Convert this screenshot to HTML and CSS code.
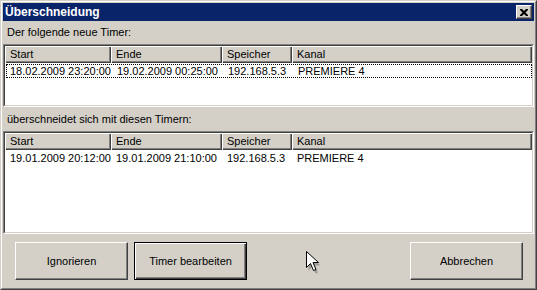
FILE: index.html
```html
<!DOCTYPE html>
<html lang="de">
<head>
    <meta charset="UTF-8">
    <title>Überschneidung</title>
    <link rel="stylesheet" href="styles.css">
</head>
<body>
    <div class="window">
        <div class="frame">
            <div class="titlebar">
                <span class="title">Überschneidung</span>
                <div class="close">
                    <svg width="8" height="7" viewBox="0 0 8 7"><path d="M0 0h2l2 2 2-2h2v1l-2.5 2.5L8 6v1H6L4 5 2 7H0V6l2.5-2.5L0 1z" fill="#000"/></svg>
                </div>
            </div>

            <div class="label">Der folgende neue Timer:</div>
            <div class="list list-top">
                <div class="list-inner">
                    <div class="row header">
                        <div class="th">Start</div>
                        <div class="th">Ende</div>
                        <div class="th">Speicher</div>
                        <div class="th">Kanal</div>
                    </div>
                    <div class="row item focused">
                        <div class="td">18.02.2009 23:20:00</div>
                        <div class="td">19.02.2009 00:25:00</div>
                        <div class="td">192.168.5.3</div>
                        <div class="td">PREMIERE 4</div>
                    </div>
                </div>
            </div>

            <div class="label label-second">überschneidet sich mit diesen Timern:</div>
            <div class="list list-bottom">
                <div class="list-inner">
                    <div class="row header">
                        <div class="th">Start</div>
                        <div class="th">Ende</div>
                        <div class="th">Speicher</div>
                        <div class="th">Kanal</div>
                    </div>
                    <div class="row item">
                        <div class="td">19.01.2009 20:12:00</div>
                        <div class="td">19.01.2009 21:10:00</div>
                        <div class="td">192.168.5.3</div>
                        <div class="td">PREMIERE 4</div>
                    </div>
                </div>
            </div>

            <div class="buttons">
                <div class="btn">Ignorieren</div>
                <div class="btn btn-default">Timer bearbeiten</div>
                <div class="btn btn-cancel">Abbrechen</div>
            </div>
        </div>

        <!-- mouse pointer over the dialog -->
        <svg class="cursor" width="16" height="24" viewBox="0 0 16 24">
            <path d="M2.5 3.5v16l4-4 3 7 2.5-1-3-7h5.5z" fill="rgba(0,0,0,0.25)"/>
            <path d="M0.5 0.5v16l4-4 3 7 2.5-1-3-7h5.5z" fill="#fff" stroke="#000" stroke-width="1"/>
        </svg>
    </div>
</body>
</html>
```

FILE: styles.css
```css
body {
    margin: 0;
    font-family: 'Liberation Sans', Arial, sans-serif;
    font-size: 11px;
    color: #000;
    background: #d4d0c8;
}
.window {
    position: relative;
    width: 537px;
    height: 290px;
    box-sizing: border-box;
    background: #d4d0c8;
    border: 1px solid;
    border-color: #d4d0c8 #404040 #404040 #d4d0c8;
}
.frame {
    height: 100%;
    box-sizing: border-box;
    border: 1px solid;
    border-color: #fff #808080 #808080 #fff;
    padding: 1px;
    display: flex;
    flex-direction: column;
}
.titlebar {
    height: 18px;
    flex: none;
    background: #0a246a;
    color: #fff;
    display: flex;
    align-items: center;
    justify-content: space-between;
    padding: 0 2px 0 2px;
}
.title {
    font-weight: bold;
    font-size: 12px;
}
.close {
    width: 16px;
    height: 14px;
    box-sizing: border-box;
    background: #d4d0c8;
    border: 1px solid;
    border-color: #fff #404040 #404040 #fff;
    box-shadow: inset -1px -1px #808080;
    display: flex;
    align-items: center;
    justify-content: center;
}
.label {
    height: 23px;
    flex: none;
    line-height: 23px;
    padding-left: 4px;
}
.label-second {
    height: 24px;
    line-height: 25px;
}
.list {
    flex: none;
    box-sizing: border-box;
    border: 1px solid;
    border-color: #808080 #fff #fff #808080;
}
.list-top {
    height: 63px;
}
.list-bottom {
    flex: 1;
}
.list-inner {
    height: 100%;
    box-sizing: border-box;
    background: #fff;
    border: 1px solid;
    border-color: #404040 #d4d0c8 #d4d0c8 #404040;
}
.row {
    display: grid;
    grid-template-columns: 106px 111px 70px 1fr;
}
.th {
    height: 17px;
    line-height: 16px;
    padding-left: 5px;
    background: #d4d0c8;
    box-shadow: inset 1px 1px #fff, inset -1px -1px #404040, inset -2px -2px #808080;
    white-space: nowrap;
    overflow: hidden;
}
.td {
    height: 14px;
    line-height: 14px;
    padding-left: 5px;
    white-space: nowrap;
    overflow: hidden;
}
.item {
    margin-top: 1px;
}
.focused {
    margin-left: 1px;
    outline: 1px dotted #000;
    outline-offset: -1px;
}
.focused .td:first-child {
    padding-left: 4px;
}
.buttons {
    height: 53px;
    flex: none;
    box-sizing: border-box;
    display: flex;
    gap: 6px;
    padding: 8px 11px 0 12px;
}
.btn {
    width: 113px;
    height: 38px;
    box-sizing: border-box;
    border: 1px solid;
    border-color: #fff #404040 #404040 #fff;
    box-shadow: inset -1px -1px #808080;
    display: flex;
    align-items: center;
    justify-content: center;
}
.btn-default {
    border-color: #000;
    box-shadow: inset 1px 1px #fff, inset -1px -1px #404040, inset -2px -2px #808080;
}
.btn-cancel {
    margin-left: auto;
}
.cursor {
    position: absolute;
    left: 305px;
    top: 250px;
}
```
